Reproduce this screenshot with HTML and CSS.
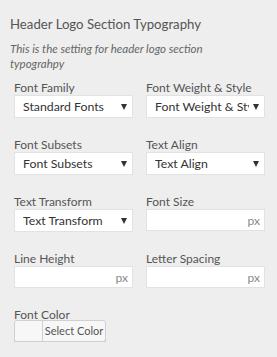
FILE: index.html
```html
<!DOCTYPE html>
<html lang="en">
  <head>
    <meta charset="UTF-8" />
    <title>Header Logo Section Typography</title>
    <link rel="stylesheet" href="styles.css">
  </head>
  <body>
    <div class="section">
      <h3 class="section-title">Header Logo Section Typography</h3>
      <p class="section-desc">This is the setting for header logo section typograhpy</p>
      <div class="fields">
        <div class="field">
          <label>Font Family</label>
          <div class="select"><span class="select-text">Standard Fonts</span><span class="arrow"></span></div>
        </div>
        <div class="field">
          <label>Font Weight &amp; Style</label>
          <div class="select"><span class="select-text">Font Weight &amp; Style</span><span class="arrow"></span></div>
        </div>
        <div class="field">
          <label>Font Subsets</label>
          <div class="select"><span class="select-text">Font Subsets</span><span class="arrow"></span></div>
        </div>
        <div class="field">
          <label>Text Align</label>
          <div class="select"><span class="select-text">Text Align</span><span class="arrow"></span></div>
        </div>
        <div class="field">
          <label>Text Transform</label>
          <div class="select"><span class="select-text">Text Transform</span><span class="arrow"></span></div>
        </div>
        <div class="field">
          <label>Font Size</label>
          <div class="unit-input"><span class="unit">px</span></div>
        </div>
        <div class="field">
          <label>Line Height</label>
          <div class="unit-input"><span class="unit">px</span></div>
        </div>
        <div class="field">
          <label>Letter Spacing</label>
          <div class="unit-input"><span class="unit">px</span></div>
        </div>
        <div class="field">
          <label>Font Color</label>
          <div class="color-btn"><span class="swatch"></span><span class="color-text">Select Color</span></div>
        </div>
      </div>
    </div>
  </body>
</html>
```

FILE: styles.css
```css
body {
  margin: 0;
  background: #eeeeee;
  font-family: Lato, "Noto Sans", sans-serif;
  color: #555;
}
.section {
  padding: 15px 10px 0 10px;
}
.section-title {
  margin: 0;
  font-size: 13.2px;
  font-weight: normal;
  line-height: 18px;
  color: #555;
}
.section-desc {
  margin: 8px 0 0 0;
  font-size: 11.5px;
  font-style: italic;
  line-height: 15px;
  color: #666;
  width: 215px;
}
.fields {
  display: grid;
  grid-template-columns: 119px 119px;
  column-gap: 13px;
  row-gap: 19px;
  align-items: start;
  padding: 9px 0 0 4px;
}
.field label {
  display: block;
  font-size: 12px;
  line-height: 15px;
  color: #555;
}
.select {
  display: flex;
  align-items: center;
  height: 23px;
  box-sizing: border-box;
  background: #fff;
  border: 1px solid #e2e2e2;
  padding: 0 5px 0 8px;
}
.select-text {
  flex: 1;
  overflow: hidden;
  white-space: nowrap;
  font-size: 12.3px;
  color: #333;
}
.arrow {
  width: 0;
  height: 0;
  margin-left: 4px;
  border-left: 3px solid transparent;
  border-right: 3px solid transparent;
  border-top: 6px solid #333;
}
.unit-input {
  display: flex;
  justify-content: flex-end;
  align-items: center;
  height: 22px;
  box-sizing: border-box;
  background: #fff;
  border: 1px solid #e2e2e2;
  padding: 0 4px;
}
.unit {
  font-size: 12px;
  color: #888;
}
.color-btn {
  display: flex;
  width: 92px;
  height: 22px;
  margin-top: -2px;
  box-sizing: border-box;
  border: 1px solid #d0d0d0;
  border-radius: 3px;
  background: #f7f7f7;
  box-shadow: 0 1px 0 #ccc;
  overflow: hidden;
}
.swatch {
  width: 27px;
  border-right: 1px solid #d0d0d0;
  background: #f7f7f7;
}
.color-text {
  flex: 1;
  font-size: 11px;
  line-height: 20px;
  text-align: center;
  color: #555;
}
```
